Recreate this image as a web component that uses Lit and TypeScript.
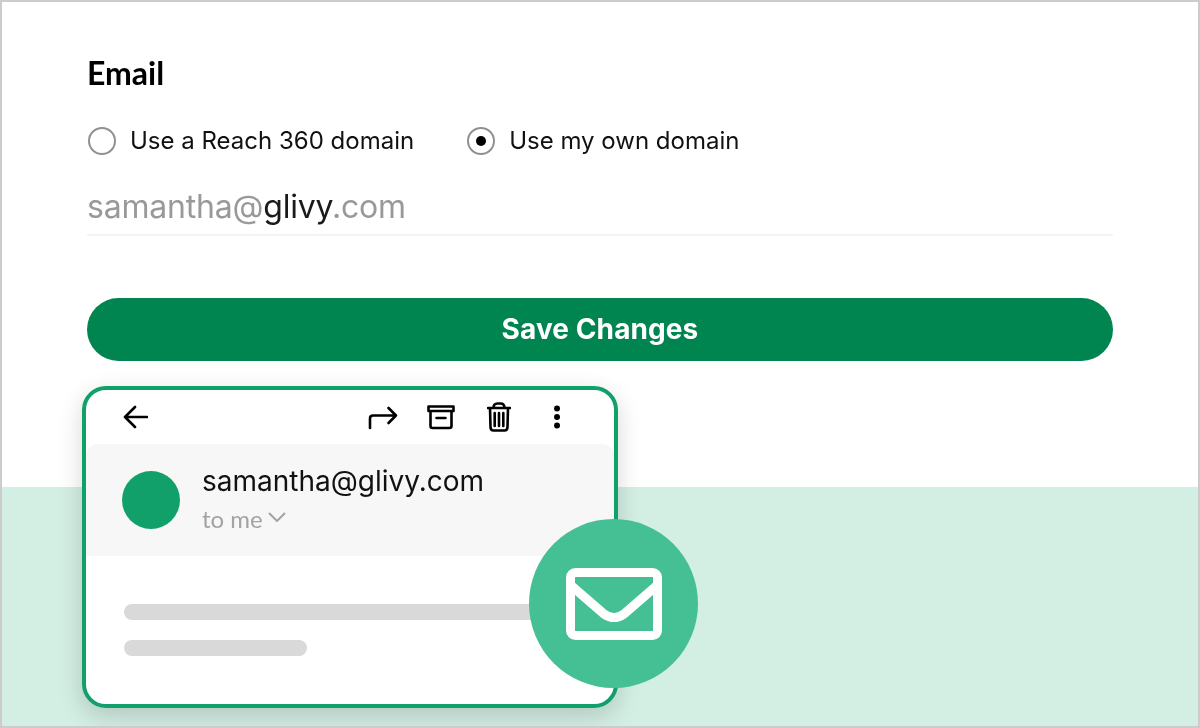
import { html, css, LitElement } from 'lit';
import { customElement } from 'lit/decorators.js';

@customElement('app-root')
export class AppRoot extends LitElement {
  static styles = css`
    :host {
      display: block;
      width: 1200px;
      height: 728px;
      font-family: 'Inter', 'Liberation Sans', sans-serif;
    }

    .frame {
      position: relative;
      box-sizing: border-box;
      width: 1200px;
      height: 728px;
      border: 2px solid #cccccc;
      background: #ffffff;
      overflow: hidden;
    }

    .form {
      display: flex;
      flex-direction: column;
      box-sizing: border-box;
      height: 485px;
      padding: 51px 85px 0;
      will-change: transform;
    }

    .band {
      height: 239px;
      background: #d3eee3;
    }

    .title {
      font-family: 'Lato', sans-serif;
      font-weight: 700;
      font-size: 32px;
      line-height: 40px;
      color: #000000;
    }

    .radios {
      display: flex;
      align-items: center;
      gap: 53px;
      margin-top: 33px;
      margin-left: 1px;
    }

    .radio {
      display: flex;
      align-items: center;
      gap: 14px;
      font-size: 24px;
      line-height: 30px;
      color: #111111;
    }

    .dot {
      display: flex;
      align-items: center;
      justify-content: center;
      box-sizing: border-box;
      width: 28px;
      height: 28px;
      border: 2.5px solid #919191;
      border-radius: 50%;
    }

    .dot i {
      width: 10px;
      height: 10px;
      border-radius: 50%;
      background: #000000;
    }

    .input {
      margin-top: 31px;
      padding-bottom: 7px;
      border-bottom: 2px solid #f3f3f3;
      font-size: 32px;
      line-height: 40px;
      letter-spacing: -0.2px;
      color: #999999;
    }

    .input b {
      font-weight: 400;
      color: #1a1a1a;
    }

    .save {
      margin-top: 62px;
      height: 63px;
      padding: 0 0 2px;
      border: 0;
      border-radius: 32px;
      background: #008450;
      color: #ffffff;
      font: 700 28px 'Inter', sans-serif;
      letter-spacing: 0.1px;
    }

    .card {
      position: absolute;
      left: 80px;
      top: 384px;
      box-sizing: border-box;
      width: 536px;
      height: 322px;
      border: 4px solid #12a06a;
      border-radius: 24px;
      background: #ffffff;
      box-shadow: 0 8px 24px rgba(0, 0, 0, 0.16);
      will-change: transform;
    }

    .toolbar {
      display: flex;
      align-items: center;
      height: 54px;
      padding: 0 53px 0 36px;
      color: #000000;
    }

    .toolbar svg {
      display: block;
      fill: none;
      stroke: currentColor;
      stroke-width: 2.6;
      stroke-linecap: round;
      stroke-linejoin: round;
    }

    .spacer {
      flex: 1;
    }

    .actions {
      display: flex;
      align-items: center;
    }

    .archive {
      margin-left: 29px;
    }

    .trash {
      margin-left: 32px;
    }

    .more {
      margin-left: 42px;
    }

    .sender {
      display: flex;
      align-items: center;
      gap: 22px;
      height: 112px;
      padding-left: 36px;
      background: #f7f7f7;
      border-radius: 12px 12px 0 0;
    }

    .avatar {
      width: 58px;
      height: 58px;
      border-radius: 50%;
      background: #12a06a;
    }

    .name {
      font-size: 28px;
      line-height: 34px;
      color: #111111;
      margin-top: -4px;
    }

    .to {
      display: flex;
      align-items: center;
      gap: 5px;
      margin-top: 7px;
      font-family: 'Lato', sans-serif;
      font-size: 24px;
      line-height: 28px;
      color: #a3a3a3;
    }

    .to svg {
      fill: none;
      stroke: #a3a3a3;
      stroke-width: 2;
      margin-top: -4px;
    }

    .lines {
      display: flex;
      flex-direction: column;
      gap: 20px;
      padding: 48px 0 0 38px;
    }

    .line {
      height: 16px;
      border-radius: 8px;
      background: #d9d9d9;
    }

    .badge {
      position: absolute;
      left: 527px;
      top: 517px;
      display: flex;
      align-items: center;
      justify-content: center;
      width: 169px;
      height: 169px;
      border-radius: 50%;
      background: #45c095;
    }

    .badge svg {
      fill: none;
      stroke: #ffffff;
      stroke-width: 9;
      stroke-linejoin: round;
    }
  `;

  render() {
    return html`
      <div class="frame">
        <div class="form">
          <div class="title">Email</div>
          <div class="radios">
            <label class="radio"><span class="dot"></span>Use a Reach 360 domain</label>
            <label class="radio"><span class="dot"><i></i></span>Use my own domain</label>
          </div>
          <div class="input">samantha@<b>glivy</b>.com</div>
          <button class="save">Save Changes</button>
        </div>
        <div class="band"></div>

        <div class="card">
          <div class="toolbar">
            <svg width="26" height="24" viewBox="0 0 26 24">
              <path d="M25 12H3M13 2L3 12l10 10" />
            </svg>
            <div class="spacer"></div>
            <div class="actions">
              <svg width="30" height="26" viewBox="0 0 30 26">
                <path d="M2 24V14.500q0-3 3-3h23M20.500 4l7.500 7.500-7.500 7.500" />
              </svg>
              <svg class="archive" width="28" height="26" viewBox="0 0 28 26">
                <path d="M1.500 2.500h25v4.500h-25zM3.500 7v15q0 2 2 2h17q2 0 2-2V7M9.500 14h9" />
              </svg>
              <svg class="trash" width="24" height="30" viewBox="0 0 24 30">
                <path d="M1 6h22M6.500 6q0-4.500 4-4.500h3q4 0 4 4.500M3 6l.500 19q0 3.500 3 3.500h11q3 0 3-3.500L21 6M7.700 11v13M12 11v13M16.300 11v13" />
              </svg>
              <svg class="more" width="8" height="26" viewBox="0 0 8 26">
                <circle cx="4" cy="4.500" r="3" fill="currentColor" stroke="none" />
                <circle cx="4" cy="13" r="3" fill="currentColor" stroke="none" />
                <circle cx="4" cy="21.500" r="3" fill="currentColor" stroke="none" />
              </svg>
            </div>
          </div>
          <div class="sender">
            <div class="avatar"></div>
            <div>
              <div class="name">samantha@glivy.com</div>
              <div class="to">to me
                <svg width="18" height="10" viewBox="0 0 18 10"><path d="M1 1l8 8 8-8" /></svg>
              </div>
            </div>
          </div>
          <div class="lines">
            <div class="line" style="width: 420px"></div>
            <div class="line" style="width: 183px"></div>
          </div>
        </div>

        <div class="badge">
          <svg width="96" height="72" viewBox="0 0 96 72">
            <rect x="4.500" y="4.500" width="87" height="63" rx="5" />
            <path d="M4.500 17 L38 46 Q48 53 58 46 L91.500 17" />
          </svg>
        </div>
      </div>
    `;
  }
}
